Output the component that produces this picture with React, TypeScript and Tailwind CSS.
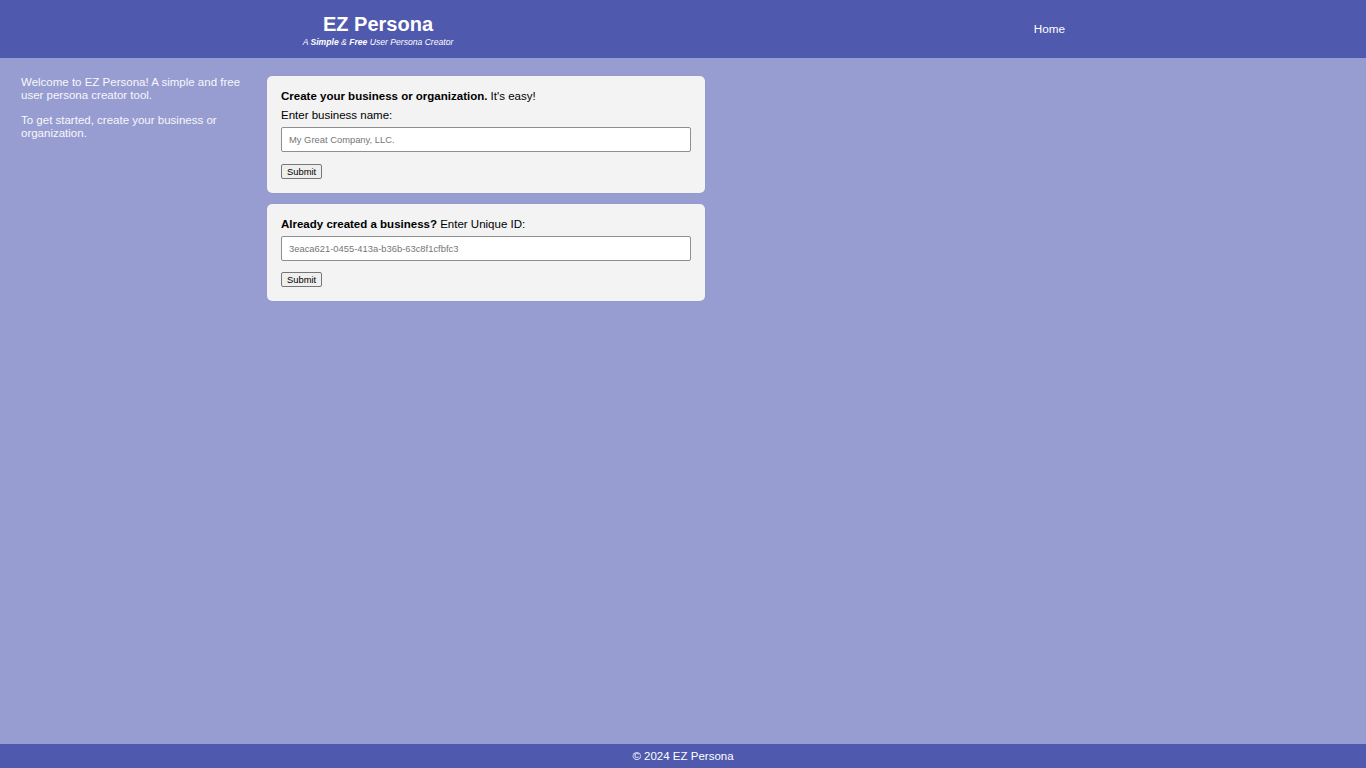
import { useState } from "react"

function Card({ children }: { children: React.ReactNode }) {
  return (
    <section className="rounded-[5px] bg-[#f3f3f3] px-[14px] pt-[13px] pb-[14px] text-[11.5px] text-black shadow-[0_0_1px_rgba(0,0,0,0.15)]">
      {children}
    </section>
  )
}

function SubmitButton() {
  return (
    <button
      type="button"
      className="block h-[15px] rounded-[2px] border border-[#767676] bg-[#efefef] px-[5px] text-[9.4px] leading-none text-black"
    >
      Submit
    </button>
  )
}

export default function App() {
  const [name, setName] = useState("")
  const [uid, setUid] = useState("")

  return (
    <div className="flex min-h-screen flex-col bg-[#979dd1] font-['Liberation_Sans',Arial,sans-serif]">
      <header className="flex h-[58px] items-center bg-[#4f59ad] text-white">
        <div className="flex w-[756px] flex-col items-center">
          <h1 className="text-[20px] font-bold leading-[24px]">EZ Persona</h1>
          <p className="mt-[1px] text-[8.6px] italic leading-[10px]">
            A <b>Simple</b> &amp; <b>Free</b> User Persona Creator
          </p>
        </div>
        <nav className="ml-auto mr-[301px] text-[11.7px]">
          <a href="#">Home</a>
        </nav>
      </header>

      <main className="flex flex-1 items-start gap-[22px] pt-[18px] pl-[21px]">
        <aside className="w-[224px] text-[11.5px] leading-[13px] text-[#f7f7fb]">
          <p>Welcome to EZ Persona! A simple and free user persona creator tool.</p>
          <p className="mt-[12px] w-[200px]">To get started, create your business or organization.</p>
        </aside>

        <div className="flex w-[438px] flex-col gap-[11px]">
          <Card>
            <p className="leading-[14px]">
              <b>Create your business or organization.</b> It's easy!
            </p>
            <label className="mt-[5px] block leading-[14px]">Enter business name:</label>
            <input
              value={name}
              onChange={(e) => setName(e.target.value)}
              placeholder="My Great Company, LLC."
              className="mt-[5px] block h-[25px] w-full rounded-[2px] border border-[#8f8f8f] bg-white px-[7px] text-[9.4px] placeholder:text-[#767676]"
            />
            <div className="mt-[12px]">
              <SubmitButton />
            </div>
          </Card>

          <Card>
            <p className="leading-[14px]">
              <b>Already created a business?</b> Enter Unique ID:
            </p>
            <input
              value={uid}
              onChange={(e) => setUid(e.target.value)}
              placeholder="3eaca621-0455-413a-b36b-63c8f1cfbfc3"
              className="mt-[5px] block h-[25px] w-full rounded-[2px] border border-[#8f8f8f] bg-white px-[7px] text-[9.4px] placeholder:text-[#767676]"
            />
            <div className="mt-[11px]">
              <SubmitButton />
            </div>
          </Card>
        </div>
      </main>

      <footer className="flex h-[24px] items-center justify-center bg-[#4f59ad] pt-[1px] text-[11.5px] text-white">
        © 2024 EZ Persona
      </footer>
    </div>
  )
}
